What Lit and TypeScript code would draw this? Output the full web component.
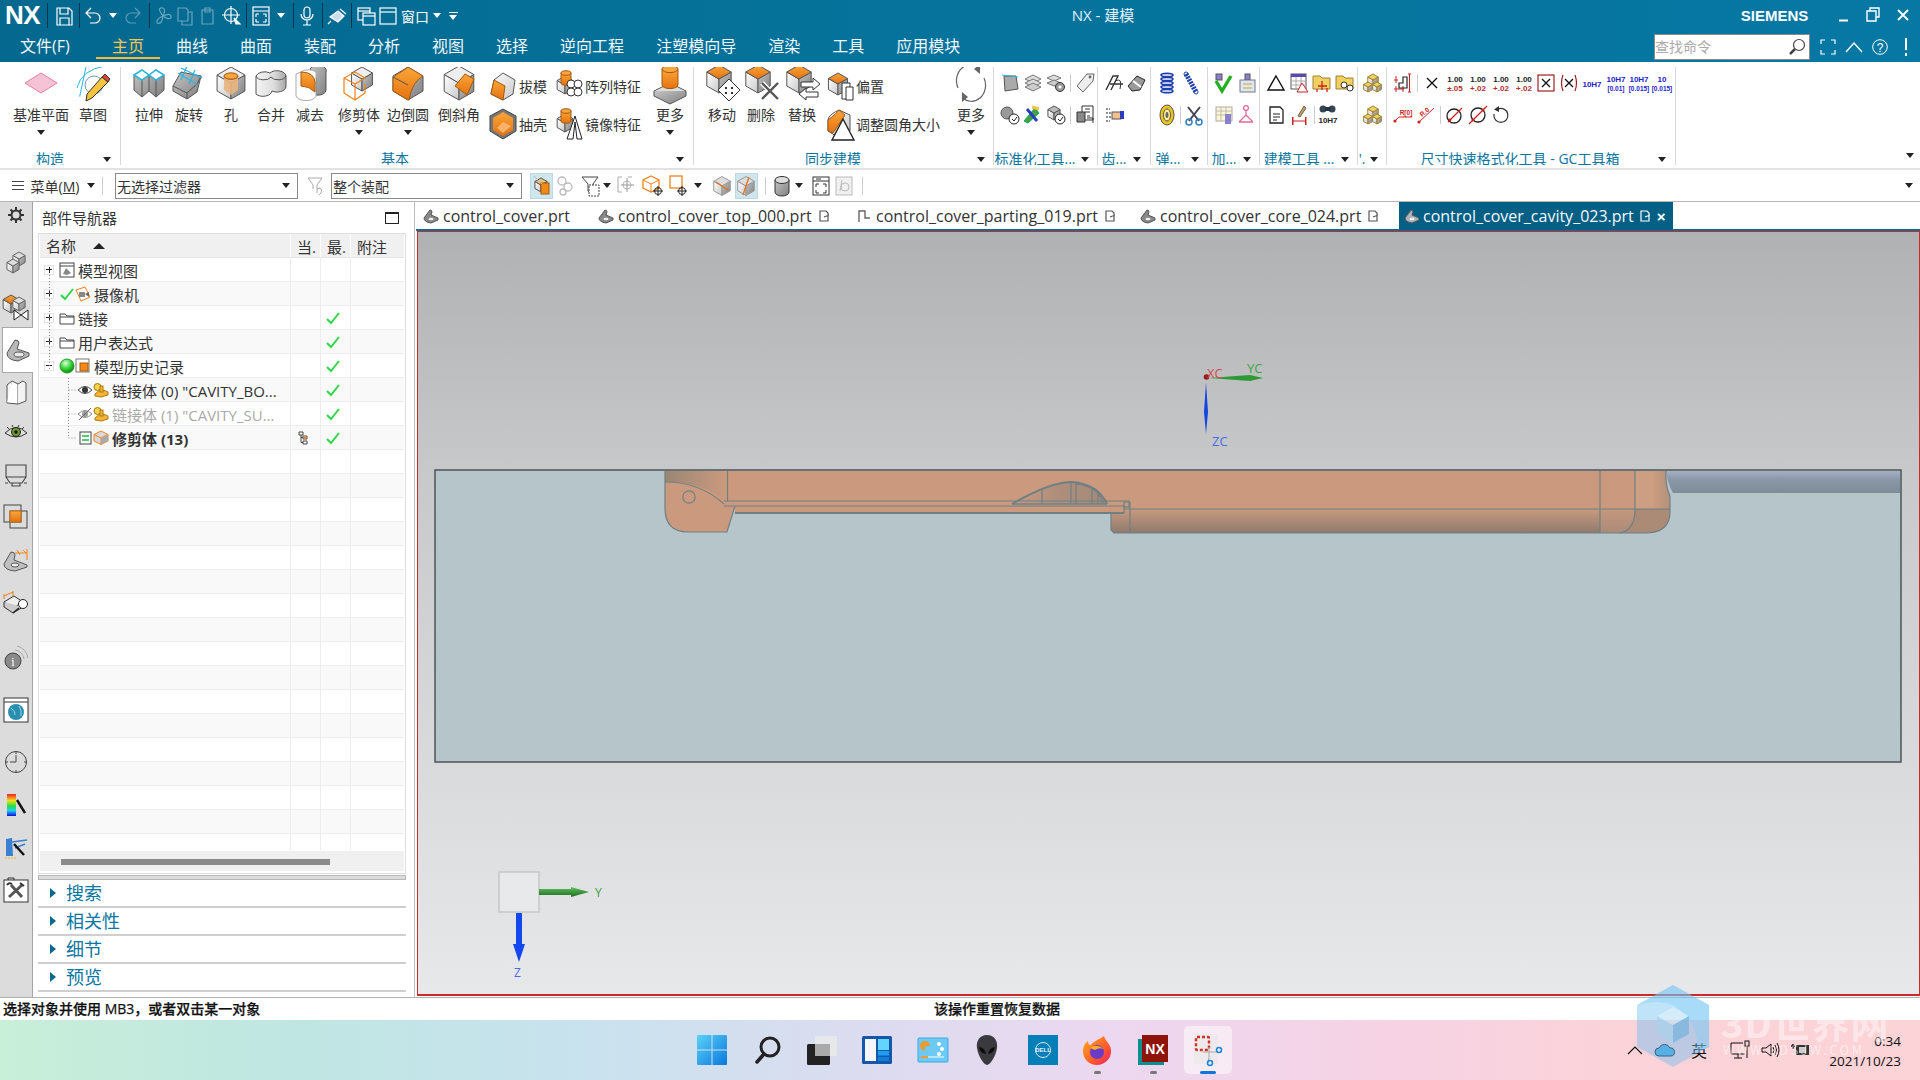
import { LitElement, html, svg, css } from "lit";
import { customElement } from "lit/decorators.js";

const I = (w: number, h: number, b: any) =>
  html`<svg class="i" width=${w} height=${h} viewBox="0 0 ${w} ${h}">${b}</svg>`;

const cube = (x: number, y: number, r: number, top = "#eee", st = "#555") => {
  const dx = r * 0.87, dy = r * 0.5;
  return svg`<polygon points="${x - dx},${y - dy} ${x},${y} ${x},${y + r} ${x - dx},${y + dy}" fill="url(#gL)" stroke=${st}/>
  <polygon points="${x},${y} ${x + dx},${y - dy} ${x + dx},${y + dy} ${x},${y + r}" fill="url(#gR)" stroke=${st}/>
  <polygon points="${x},${y - r} ${x + dx},${y - dy} ${x},${y} ${x - dx},${y - dy}" fill=${top} stroke=${st}/>`;
};
const OR = "url(#gO)";
const cyl = (x: number, y: number, rx: number, h: number, f = OR) =>
  svg`<path d="M${x - rx} ${y} V${y + h} A${rx} ${rx * 0.45} 0 0 0 ${x + rx} ${y + h} V${y}Z" fill=${f} stroke="#a35a10"/><ellipse cx=${x} cy=${y} rx=${rx} ry=${rx * 0.45} fill="#f9a53f" stroke="#a35a10"/>`;

const big: Record<string, any> = {
  datum: I(36, 26, svg`<polygon points="2,13 18,3 34,13 18,23" fill="#f6c3d6" stroke="#e57ba3"/>`),
  sketch: I(36, 40, svg`<path d="M2 25 Q6 7 30 3" fill="none" stroke="#29b6e0"/><path d="M8 2 V34" stroke="#29b6e0" fill="none" transform="rotate(12 8 18)"/><circle cx="19" cy="22" r="9" fill="none" stroke="#6a9ab0"/><polygon points="27,14 33,19 17,35 11,38 12,31" fill="#f5c33d" stroke="#333"/><polygon points="27,14 33,19 35,16 30,11" fill="#d8453a" stroke="#333"/>`),
  extrude: I(36, 38, svg`<path d="M3 11 L11 6 L18 11 L25 6 L33 11 V26 L25 33 L18 27 L11 33 L3 26Z" fill="url(#gR)" stroke="#555"/><path d="M3 11 L11 16 V33 M11 16 L18 11 V27 M18 11 L25 16 V33 M25 16 L33 11" fill="none" stroke="#555"/><path d="M3 11 L11 6 L18 11 L25 6 L33 11 L25 16 L18 11 L11 16Z" fill="#fff" stroke="#29b6e0" stroke-width="1.5"/>`),
  revolve: I(36, 38, svg`<path d="M2 22 L10 8 L30 12 L26 28 L16 35 L2 27Z" fill="url(#gR)" stroke="#555"/><path d="M2 22 L16 29 V35 M16 29 L26 20 L30 12" fill="none" stroke="#555"/><path d="M10 4 L31 14 M7 9 L27 21 M16 2 L10 16 M24 6 L18 20" stroke="#29b6e0" fill="none" stroke-width="1.3"/>`),
  hole: I(36, 38, svg`${cube(18, 19, 16)}<path d="M11 12 V26 L18 31 L25 26 V12" fill="#e9b47e" opacity=".9"/>${cyl(18, 12, 7, 0)}`),
  unite: I(36, 38, svg`<path d="M3 12 A9 6 0 0 1 17 9 A9 6 0 0 1 33 12 V23 A9 6 0 0 1 19 27 A9 6 0 0 1 3 30Z" fill="url(#gU)" stroke="#555"/><path d="M3 12 A8 5 0 0 0 18 13 A8 5 0 0 0 33 12" fill="none" stroke="#555"/>`),
  subtract: I(36, 38, svg`<path d="M18 5 A8 5 0 0 1 34 8 V26 A8 5 0 0 1 24 31 V14 Z" fill="url(#gR)" stroke="#555"/><path d="M9 8 A9 5 0 0 1 24 8 V30 A9 5 0 0 1 4 32 V10Z" fill="#fff" stroke="#aaa"/><path d="M9 8 Q22 8 23 18 L23 28 Q17 22 9 22Z" fill=${OR} stroke="#a35a10"/>`),
  trim: I(36, 38, svg`${cube(21, 15, 12)}<path d="M14 8 L3 14 V29 L14 36 L24 29 V20 M3 14 L14 20 L24 14 M14 20 V36 M14 8 L24 14" fill="none" stroke="#f0821c" stroke-width="1.2"/>`),
  blend: I(36, 38, svg`<path d="M18 3 L33 12 V27 L18 36 L3 27 V12Z" fill="url(#gR)" stroke="#555"/><path d="M3 13 Q16 5 18 3 L33 12 Q22 18 19 36 L18 36 L3 27Z" fill=${OR} stroke="#a35a10"/><path d="M3 13 L18 21" stroke="#555"/>`),
  chamfer: I(36, 38, svg`${cube(18, 19, 17)}<polygon points="24,10 33,15 26,31 14,22" fill=${OR} stroke="#a35a10"/>`),
  more: I(36, 40, svg`<polygon points="18,20 34,28 18,38 2,28" fill="#ddd" stroke="#555"/><path d="M2 28 V33 L18 41 L34 33 V28" fill="url(#gR)" stroke="#555"/>${cyl(18, 6, 8, 16)}`),
  moveB: I(36, 36, svg`${cube(15, 14, 14, OR)}<polygon points="25,14 36,25 25,36 14,25" fill="#fff" stroke="#333"/><path d="M21 22h2v2h-2zM27 22h2v2h-2zM21 27h2v2h-2zM27 27h2v2h-2z" fill="#333"/>`),
  del: I(36, 36, svg`${cube(15, 14, 14, OR)}<path d="M19 18 L35 34 M35 18 L19 34" stroke="#fff" stroke-width="5"/><path d="M19 18 L35 34 M35 18 L19 34" stroke="#555" stroke-width="2.4"/>`),
  rep: I(36, 36, svg`${cube(15, 14, 14, OR)}<path d="M18 20 H30 V16 L37 22 L30 28 V25 H18 Z" fill="#fff" stroke="#333" transform="translate(-1 -3)"/><path d="M34 27 H22 V23 L15 29 L22 35 V32 H34 Z" fill="#fff" stroke="#333"/>`),
  cycle: I(34, 42, svg`<path d="M4 26 A14 16 0 0 1 26 7 M30 16 A14 16 0 0 1 8 35" fill="none" stroke="#666" stroke-width="1.2"/><path d="M26 2 V12 L20 7Z M8 30 V40 L14 35Z" fill="#666"/>`),
  draft: I(28, 30, svg`<polygon points="14,2 26,9 24,23 14,29 2,23 5,9" fill="url(#gL)" stroke="#555"/><polygon points="5,9 16,15 14,29 2,23" fill=${OR} stroke="#a35a10"/>`),
  shell: I(28, 32, svg`<polygon points="14,1 27,8 27,23 14,31 1,23 1,8" fill="#777" stroke="#444"/><polygon points="14,4 24,10 24,22 14,28 4,22 4,10" fill=${OR}/><path d="M8 20 L14 14 L22 18 L14 25Z" fill="#f8b36a"/>`),
  pattern: I(28, 32, svg`${cube(10, 15, 9, "#ddd")}${cyl(11, 3, 5, 10)}<g fill="#fff" stroke="#333"><circle cx="16" cy="14" r="4"/><circle cx="23" cy="14" r="4"/><circle cx="16" cy="22" r="4"/><circle cx="23" cy="22" r="4"/></g>`),
  mirror: I(28, 32, svg`${cube(10, 15, 9, "#ddd")}${cyl(11, 3, 5, 10)}<path d="M20 8 L12 31 H18 L20 14 L22 31 H27Z" fill="#fff" stroke="#222"/>`),
  offset: I(28, 30, svg`${cube(12, 13, 11, OR)}<path d="M16 12 H24 V28 H16Z" fill="#fff" stroke="#333"/><path d="M20 16 H27 V29 H20Z" fill="#fff" stroke="#333"/>`),
  resize: I(30, 34, svg`<path d="M3 13 Q3 8 14 3 L25 8 V24 L14 31 L3 24Z" fill="url(#gL)" stroke="#555"/><path d="M3 13 Q12 6 14 3 L20 8 L8 26 L3 24Z" fill=${OR} stroke="#a35a10"/><polygon points="18,12 29,33 7,33" fill="#fff" stroke="#222" stroke-width="1.4"/>`),
};

const t2 = (a: string, b: string, col: string) =>
  I(22, 24, svg`<text x="11" y="11" text-anchor="middle" class="tt" fill=${col === "blue" ? "#2222cc" : "#222"}>${a}</text><text x="11" y="20" text-anchor="middle" class=${col === "blue" ? "t6" : "tt"} fill=${col === "blue" ? "#2222cc" : "#b03030"}>${b}</text>`);

const sm: Record<string, any> = {
  a1: I(20, 20, svg`<polygon points="4,3 16,3 18,16 5,18" fill="#aaa" stroke="#555"/><path d="M2 2 L18 4" stroke="#29b6e0"/>`),
  a2: I(20, 20, svg`<polygon points="10,2 18,6 10,10 2,6" fill="#ddd" stroke="#777"/><polygon points="10,6 18,10 10,14 2,10" fill="#ddd" stroke="#777"/><polygon points="10,10 18,14 10,18 2,14" fill="#ccc" stroke="#777"/>`),
  a3: I(20, 20, svg`<polygon points="8,2 15,5 8,8 1,5" fill="#ddd" stroke="#777"/><polygon points="8,7 15,10 8,13 1,10" fill="#ccc" stroke="#777"/><circle cx="14" cy="14" r="4.5" fill="#999" stroke="#333"/><circle cx="14" cy="14" r="1.6" fill="#fff"/>`),
  a4: I(20, 22, svg`<polygon points="12,2 19,2 18,9 8,20 2,14" fill="#eee" stroke="#666"/><circle cx="15" cy="5" r="1.4" fill="#666"/>`),
  a5: I(20, 20, svg`<circle cx="7" cy="8" r="6" fill="#999" stroke="#555"/><circle cx="14" cy="14" r="5" fill="#fff" stroke="#222"/><path d="M12 14 L14 16 L17 12" fill="none" stroke="#222"/>`),
  a6: I(20, 20, svg`<path d="M3 16 L14 3 L18 8 L7 18Z" fill="#43a047" stroke="#1a5"/><path d="M6 4 L16 16" stroke="#2a3cc0" stroke-width="3"/><path d="M11 2 L18 4" stroke="#f4c542" stroke-width="3"/>`),
  a7: I(20, 20, svg`${cube(8, 8, 7, "#bbb")}<circle cx="14" cy="14" r="5" fill="#fff" stroke="#222"/><path d="M12 14 L14 16 L17 12" fill="none" stroke="#222"/>`),
  a8: I(20, 22, svg`<path d="M7 2 H18 V16 H7Z" fill="#fff" stroke="#333"/><path d="M2 8 H10 V18 H2Z" fill="#888" stroke="#333"/><path d="M10 5h5M10 8h5M12 12h3" stroke="#333"/><path d="M12 14 L18 14 V19" fill="none" stroke="#333"/>`),
  b1: I(22, 20, svg`<path d="M3 17 L10 3 H15 L8 17 M7 11 H20" fill="none" stroke="#333" stroke-width="1.4"/><path d="M12 8 Q20 4 17 16" fill="none" stroke="#333"/>`),
  b2: I(22, 20, svg`<path d="M3 13 L12 3 L20 7 L15 17 L7 18Z" fill="#999" stroke="#222"/><path d="M8 8 L16 14" stroke="#fff" stroke-width="2"/>`),
  b3: I(22, 16, svg`<path d="M2 2h4M2 6h6M2 10h6M2 14h4" stroke="#222" stroke-dasharray="2 1"/><rect x="8" y="5" width="9" height="7" fill="#f0c090" stroke="#555"/><rect x="16" y="4" width="4" height="8" fill="#2a3cc0"/>`),
  c1: I(16, 22, svg`<g fill="none" stroke="#1f3fae" stroke-width="1.7"><ellipse cx="8" cy="3" rx="6" ry="1.7"/><ellipse cx="8" cy="7" rx="6" ry="1.7"/><ellipse cx="8" cy="11" rx="6" ry="1.7"/><ellipse cx="8" cy="15" rx="6" ry="1.7"/><ellipse cx="8" cy="19" rx="6" ry="1.7"/></g>`),
  c2: I(18, 24, svg`<path d="M4 3 L14 21" stroke="#1f3fae" stroke-width="5" stroke-dasharray="2 1"/><circle cx="4" cy="3" r="2" fill="none" stroke="#1f3fae"/><circle cx="14" cy="21" r="2" fill="none" stroke="#1f3fae"/>`),
  c3: I(16, 22, svg`<ellipse cx="8" cy="11" rx="7" ry="10" fill="#e8c31e" stroke="#555"/><ellipse cx="8" cy="11" rx="3.5" ry="6" fill="#fff09a" stroke="#555"/><ellipse cx="8" cy="11" rx="1.5" ry="3" fill="#666"/>`),
  c4: I(20, 22, svg`<path d="M4 3 L15 17 M16 3 L5 17" stroke="#445" stroke-width="2"/><circle cx="5" cy="18" r="3" fill="none" stroke="#3080c0" stroke-width="1.5"/><circle cx="15" cy="18" r="3" fill="none" stroke="#3080c0" stroke-width="1.5"/>`),
  d1: I(20, 22, svg`<rect x="3" y="2" width="6" height="6" fill="#8a80d0" stroke="#555"/><path d="M3 9 L9 19 L18 4" fill="none" stroke="#22b022" stroke-width="3.4"/>`),
  d2: I(20, 22, svg`<rect x="8" y="2" width="5" height="6" fill="#8a80d0" stroke="#555"/><rect x="3" y="8" width="15" height="12" fill="#dde8f5" stroke="#778"/><path d="M6 12h9M6 16h9" stroke="#d8a020"/>`),
  d3: I(20, 22, svg`<rect x="2" y="3" width="16" height="14" fill="#fff6d0" stroke="#aaa"/><path d="M2 7h16M2 11h16M7 3v14M12 3v14" stroke="#bbb"/><rect x="11" y="10" width="6" height="10" fill="#8a80d0"/>`),
  d4: I(20, 22, svg`<circle cx="10" cy="4" r="2.4" fill="none" stroke="#e06a9a" stroke-width="1.3"/><path d="M10 6 V11 L3 18 M10 11 L17 18 M3 18 H17" stroke="#e06a9a" fill="none" stroke-width="1.3"/>`),
  e1: I(20, 20, svg`<polygon points="10,3 18,17 2,17" fill="#fff" stroke="#111" stroke-width="1.4"/>`),
  e2: I(20, 22, svg`<rect x="2" y="2" width="15" height="15" fill="#fff" stroke="#555"/><rect x="2" y="2" width="15" height="3" fill="#5a4ab0"/><path d="M2 9h15M2 13h15M7 5v12M12 5v12" stroke="#aaa"/><polygon points="13,11 19,20 8,20" fill="#fff" stroke="#c22"/>`),
  e3: I(20, 22, svg`<path d="M1 4 H8 L10 6 H18 V17 H1Z" fill="#f0d060" stroke="#a08030"/><path d="M10 9 V18 M6 14 H15 M5 17 V20 M15 16 V20" stroke="#c22" stroke-width="1.3"/>`),
  e4: I(20, 22, svg`<path d="M1 4 H8 L10 6 H18 V17 H1Z" fill="#f0d060" stroke="#a08030"/><circle cx="9" cy="13" r="3" fill="#fff" stroke="#333"/><circle cx="15" cy="16" r="3" fill="#fff" stroke="#333"/>`),
  e5: I(20, 20, svg`<path d="M4 2 H14 L17 5 V18 H4Z" fill="#fff" stroke="#222" stroke-width="1.3"/><path d="M7 9h7M7 12h7M7 15h4" stroke="#222"/>`),
  e6: I(20, 22, svg`<rect x="3" y="13" width="1.5" height="8" fill="#c22"/><rect x="16" y="13" width="1.5" height="8" fill="#c22"/><path d="M4 17 H16" stroke="#c22"/><path d="M9 12 L15 2 L17 4 L11 13Z" fill="#c9a060" stroke="#665"/>`),
  e7: I(22, 24, svg`<circle cx="6" cy="6" r="3.5" fill="#345" /><circle cx="15" cy="6" r="3.5" fill="#345"/><rect x="8" y="4" width="5" height="4" fill="#234"/><text x="11" y="20" text-anchor="middle" class="tt" fill="#222">10H7</text>`),
  f1: I(20, 22, svg`${cube(10, 8, 6, "#f0d060", "#a08030")}${cube(5, 15, 5, "#f0d060", "#a08030")}${cube(14, 15, 5, "#f0d060", "#a08030")}`),
  g1: I(22, 22, svg`<path d="M2 8h4M4 4v7M16 2h3M17.500 2v18M16 20h3M2 17h10M4 14v6M11 14v6" stroke="#c22" fill="none"/><path d="M7 11 H11 V5 H15 V16 H7Z" fill="none" stroke="#222" stroke-width="1.2"/>`),
  x: I(16, 16, svg`<path d="M3 3 L13 13 M13 3 L3 13" stroke="#111" stroke-width="1.4"/>`),
  xb: I(20, 20, svg`<rect x="2" y="2" width="16" height="16" fill="#fff" stroke="#a02020" stroke-width="1.2"/><path d="M6 6 L14 14 M14 6 L6 14" stroke="#111" stroke-width="1.3"/>`),
  xp: I(20, 20, svg`<path d="M4 2 Q1 10 4 18 M16 2 Q19 10 16 18" fill="none" stroke="#a02020" stroke-width="1.2"/><path d="M6 6 L14 14 M14 6 L6 14" stroke="#111" stroke-width="1.3"/>`),
  dim1: t2("1.00", "±.05", "red"),
  dim2: t2("1.00", "+.02", "red"),
  h7: I(24, 16, svg`<text x="12" y="12" text-anchor="middle" class="tt" fill="#2222cc">10H7</text>`),
  h8: t2("10H7", "[0.01]", "blue"),
  h9: t2("10H7", "[0.015]", "blue"),
  h10: t2("10", "[0.015]", "blue"),
  r1: I(22, 18, svg`<path d="M2 16 L7 11 H20" stroke="#c22" fill="none"/><circle cx="3" cy="15" r="1.6" fill="#c22"/><text x="14" y="9" text-anchor="middle" class="t6" fill="#c22">R[0]</text>`),
  r2: I(22, 20, svg`<path d="M3 18 L19 3" stroke="#c22"/><circle cx="4" cy="17" r="1.6" fill="#c22"/><text x="7" y="12" class="t6" fill="#c22" transform="rotate(-40 7 12)">R.0</text>`),
  r3: I(20, 20, svg`<circle cx="9" cy="11" r="7" fill="none" stroke="#222" stroke-width="1.3"/><path d="M3 17 L17 3" stroke="#c22" stroke-width="1.3"/><circle cx="5" cy="15" r="1.4" fill="#c22"/>`),
  r4: I(20, 20, svg`<circle cx="10" cy="10" r="7" fill="none" stroke="#222" stroke-width="1.3"/><path d="M1 19 L19 1" stroke="#c22" stroke-width="1.3"/><circle cx="5" cy="15" r="1.4" fill="#c22"/><circle cx="15" cy="5" r="1.4" fill="#c22"/>`),
  r5: I(20, 20, svg`<path d="M8 4 A7 7 0 1 1 4 9" fill="none" stroke="#333" stroke-width="1.2"/><path d="M9 1 L4 4.500 L9 7Z" fill="#333"/>`),
};

const tb: Record<string, any> = {
  part: I(24, 24, svg`${cube(12, 11, 7, "#e8c878")}<rect x="12" y="9" width="8" height="11" fill="#f28a1a" stroke="#a35a10"/><path d="M5 2 L13 10" stroke="#bbb"/>`),
  link: I(22, 24, svg`<g fill="none" stroke="#bbb" stroke-width="1.3"><circle cx="8" cy="7" r="4"/><circle cx="14" cy="13" r="4"/><circle cx="9" cy="18" r="3"/></g>`),
  funnel: I(24, 24, svg`<path d="M3 3 H19 L14 10 V21 L9 17 V10Z" fill="none" stroke="#444"/><rect x="10" y="11" width="10" height="11" fill="#fff" stroke="#444" stroke-dasharray="2 1"/>`),
  sel1: I(22, 24, svg`<path d="M6 3 H2 V18 H6 M12 3 H16" stroke="#aaa" fill="none"/><circle cx="11" cy="11" r="4" fill="none" stroke="#bbb"/><path d="M11 4 V18 M5 11 H18" stroke="#999"/>`),
  sel2: I(24, 24, svg`<polygon points="10,2 18,6 18,14 10,18 2,14 2,6" fill="none" stroke="#f0821c" stroke-width="1.3"/><path d="M2 6 L10 10 L18 6 M10 10 V18" stroke="#f0821c" fill="none"/><circle cx="17" cy="17" r="3.500" fill="none" stroke="#222"/><path d="M17 12 V22 M12 17 H22" stroke="#222"/>`),
  sel3: I(24, 24, svg`<rect x="3" y="2" width="12" height="12" fill="none" stroke="#f0821c" stroke-width="1.3"/><circle cx="15" cy="17" r="3.500" fill="none" stroke="#222"/><path d="M15 12 V22 M10 17 H20" stroke="#222"/>`),
  c1: I(22, 24, svg`${cube(11, 12, 9.500, "#ddd", "#999")}<path d="M5 8 L17 16" stroke="#e8721c" stroke-width="1.4"/>`),
  c2: I(22, 24, svg`${cube(11, 12, 9.500, "#ddd", "#999")}<path d="M14 3 L8 21 M11 12 L14 3" stroke="#e8721c" stroke-width="1.3"/>`),
  cyl: I(22, 24, svg`<path d="M4 6 V18 A7 4 0 0 0 18 18 V6Z" fill="url(#gR)" stroke="#333"/><ellipse cx="11" cy="6" rx="7" ry="3.500" fill="#ddd" stroke="#333"/>`),
  fit: I(20, 22, svg`<rect x="2" y="2" width="16" height="18" fill="#fff" stroke="#333"/><path d="M2 6 H18 M5 4 H10" stroke="#333"/><path d="M5 9 H8 M5 9 V12 M15 9 H12 M15 9 V12 M5 18 H8 M5 18 V15 M15 18 H12 M15 18 V15" stroke="#333"/>`),
  gr: I(20, 22, svg`<rect x="2" y="2" width="16" height="18" fill="#f0f0f0" stroke="#bbb"/><circle cx="11" cy="12" r="4" fill="none" stroke="#bbb"/><path d="M6 16 L8 5" stroke="#bbb"/>`),
};

const rail = [
  [215, 0, I(20, 20, svg`<circle cx="10" cy="10" r="4.500" fill="none" stroke="#333" stroke-width="2"/><path d="M10 2 V5 M10 15 V18 M2 10 H5 M15 10 H18 M4.500 4.500 L6.500 6.500 M13.500 13.500 L15.500 15.500 M4.500 15.500 L6.500 13.500 M13.500 6.500 L15.500 4.500" stroke="#333" stroke-width="2"/>`)],
  [264, 0, I(26, 26, svg`${cube(16, 8, 7, "#ddd", "#666")}${cube(10, 15, 7, "#ddd", "#666")}`)],
  [307, 0, I(28, 28, svg`${cube(9, 11, 9, OR)}${cube(17, 11, 7, "#ddd", "#666")}<path d="M12 17 L26 27 V17 L12 27Z" fill="#fff" stroke="#222"/>`)],
  [350, 1, I(24, 24, svg`<path d="M1 15 L9 2 Q13 2 13 5 L11 11 L23 15 V18 L12 23 Q1 22 1 15Z" fill="#b8b8b8" stroke="#555"/><ellipse cx="13" cy="16.500" rx="5" ry="2.500" fill="#e8e8e8" stroke="#555"/>`)],
  [392, 0, I(22, 26, svg`<path d="M2 6 L7 2 V19 L2 24Z" fill="#f6f6f6" stroke="#555"/><path d="M7 2 L13 5 V25 L2 24" fill="#fff" stroke="#555"/><path d="M13 5 L18 2 L21 4 V22 L13 25" fill="#f3f3f3" stroke="#555"/>`)],
  [432, 0, I(24, 16, svg`<path d="M1 9 Q12 -2 23 9 Q12 17 1 9Z" fill="#ddd" stroke="#333"/><circle cx="12" cy="8" r="4.500" fill="#6a9a2a" stroke="#222"/><circle cx="12" cy="8" r="1.700" fill="#111"/><path d="M3 3 L5 5 M8 1 L9 3 M15 1 L14 3 M20 3 L18 5" stroke="#333"/>`)],
  [475, 0, I(24, 24, svg`<path d="M2 2 H22 V14 H2Z M2 14 L6 20 H18 L22 14 M4 20 H1 M20 20 H23 M8 20 V23 H16 V20" fill="none" stroke="#444" stroke-width="1.100"/>`)],
  [517, 0, I(26, 26, svg`<rect x="1" y="1" width="17" height="17" fill="none" stroke="#444"/><rect x="7" y="7" width="17" height="17" fill="none" stroke="#444"/><rect x="7" y="7" width="11" height="11" fill=${OR} stroke="#c26a10"/>`)],
  [560, 0, I(26, 24, svg`<path d="M1 16 L8 4 Q12 4 12 7 L11 12 L24 17 V19 L12 23 Q1 22 1 16Z" fill="#c0c0c0" stroke="#555"/><ellipse cx="12" cy="17" rx="4" ry="2" fill="#eee" stroke="#555"/><path d="M12 5 H24 M24 1 V12 M14 2 L17 7 M20 2 L23 5" stroke="#f0821c"/>`)],
  [603, 0, I(26, 26, svg`<polygon points="1,12 11,6 20,12 10,18" fill="#eee" stroke="#333"/><path d="M1 12 V17 L10 23 L20 17" fill="#ccc" stroke="#333"/><path d="M1 6 L10 2 M1 4 V9 M10 1 V6" stroke="#f0821c"/><circle cx="20" cy="14" r="4.500" fill="#fff" stroke="#222"/><path d="M16 18 L10 23" stroke="#222" stroke-width="1.6"/>`)],
  [658, 0, I(26, 26, svg`<circle cx="10" cy="16" r="8" fill="#8a8a8a" stroke="#444"/><text x="10" y="21" text-anchor="middle" font-size="12" fill="#fff" font-family="Liberation Serif">i</text><path d="M12 5 A10 10 0 0 1 21 14 M14 1 A14 14 0 0 1 25 13" fill="none" stroke="#aaa"/>`)],
  [710, 0, I(26, 26, svg`<rect x="1" y="1" width="24" height="24" fill="#fff" stroke="#333"/><path d="M1 5 H25" stroke="#333"/><circle cx="13" cy="15" r="8" fill="#2a8fb0"/><path d="M8 11 Q13 15 12 18 M16 9 Q19 13 18 19" stroke="#9fd4e6" fill="none"/>`)],
  [762, 0, I(24, 24, svg`<circle cx="12" cy="12" r="10.500" fill="none" stroke="#444"/><path d="M12 1 V4 M12 20 V23 M1 12 H4 M20 12 H23 M12 5 V12 H6" stroke="#444" fill="none"/>`)],
  [805, 0, I(24, 26, svg`<defs><linearGradient id="rb" x2="0" y2="1"><stop offset="0" stop-color="#f02020"/><stop offset=".3" stop-color="#f0e020"/><stop offset=".55" stop-color="#20e040"/><stop offset=".75" stop-color="#20d0f0"/><stop offset="1" stop-color="#1010e0"/></linearGradient></defs><rect x="3" y="2" width="9" height="22" fill="url(#rb)"/><path d="M13 8 L21 21" stroke="#111" stroke-width="2.400"/>`)],
  [848, 0, I(26, 24, svg`<polygon points="3,3 9,2 10,20 3,20" fill="#3a7fd0"/><path d="M9 6 L24 4 M12 12 L22 8" stroke="#3a7fd0" stroke-width="1.500"/><path d="M11 8 L21 19" stroke="#111" stroke-width="2.400"/><path d="M2 22 H14" stroke="#e0c020" stroke-dasharray="2 1"/>`)],
  [890, 0, I(26, 26, svg`<rect x="1" y="3" width="24" height="22" fill="#fff" stroke="#333"/><path d="M5 3 V1 H11 V3" fill="none" stroke="#333"/><path d="M6 20 L19 8 M8 8 L19 20" stroke="#555" stroke-width="3"/><path d="M4 8 Q6 5 9 7 M17 6 L21 9" stroke="#333" stroke-width="2" fill="none"/>`)],
];

function place(origin: number, items: [number, number, any][]) {
  let x = origin;
  return items.map(([c, w, t]) => {
    const m = c - w / 2 - x;
    x = c + w / 2;
    return html`<span class="p" style="margin-left:${m}px;width:${w}px">${t}</span>`;
  });
}
const dd = html`<i class="dd"></i>`;
const ddw = html`<i class="dd w"></i>`;
const vsep = html`<i class="vs"></i>`;
const tsep = html`<i class="ts"></i>`;
const bigT = (label: string, icon: any, drop = false) =>
  html`<span class="bt"><span class="bi">${icon}</span><span class="bl">${label}</span>${drop ? html`<i class="dd bd"></i>` : ""}</span>`;
const smT = (a: [any, string], b: [any, string]) =>
  html`<span class="st"><span class="sr"><span class="si">${a[0]}</span>${a[1]}</span><span class="sr"><span class="si">${b[0]}</span>${b[1]}</span></span>`;

const W = (b: any, w = 22, h = 22) => I(w, h, svg`<g fill="none" stroke="#fff" stroke-width="1.200">${b}</g>`);
const qat: [number, number, any][] = [
  [47, 1, tsep],
  [64, 22, W(svg`<path d="M4 3 H16 L19 6 V20 H4Z M7 3 V9 H15 V3 M7 20 V13 H16 V20"/>`)],
  [79, 1, tsep],
  [92, 22, W(svg`<path d="M6 8 H14 A5 5 0 0 1 14 18 H9 M10 3 L5 8 L10 13"/>`)],
  [113, 10, ddw],
  [134, 22, W(svg`<g opacity=".35"><path d="M16 8 H8 A5 5 0 0 0 8 18 H13 M12 3 L17 8 L12 13"/></g>`)],
  [149, 1, tsep],
  [163, 22, W(svg`<g opacity=".4"><path d="M11 11 Q4 2 11 3 Q14 5 11 11 Q20 7 19 13 Q16 15 11 11 Q10 20 5 18 Q4 14 11 11"/></g>`)],
  [185, 22, W(svg`<g opacity=".4"><path d="M4 3 H12 L14 5 V16 H4Z M14 7 H18 V20 H8 V16"/></g>`)],
  [208, 22, W(svg`<g opacity=".4"><path d="M5 5 H16 V19 H5Z M8 3 H13 V7 H8Z"/></g>`)],
  [232, 22, W(svg`<circle cx="10" cy="10" r="6.500"/><path d="M10 1 V19 M1 10 H19"/><path d="M13 13 L19 19 L15 19 Z" fill="#fff"/>`)],
  [246, 1, tsep],
  [261, 22, W(svg`<rect x="3" y="2" width="16" height="18"/><path d="M3 6 H19 M6 9 H9 M6 9 V12 M16 9 H13 M16 9 V12 M6 17 H9 M6 17 V14 M16 17 H13 M16 17 V14"/>`)],
  [281, 10, ddw],
  [293, 1, tsep],
  [307, 20, W(svg`<rect x="7" y="2" width="6" height="11" rx="3"/><path d="M4 9 A6 6 0 0 0 16 9 M10 15 V20 M6 20 H14"/>`, 20)],
  [322, 1, tsep],
  [337, 22, W(svg`<path d="M4 12 L12 6 L18 11 L12 17 Z M14 4 L20 9 M5 16 L2 19" fill="#cde"/>`)],
  [351, 1, tsep],
  [366, 22, W(svg`<rect x="3" y="3" width="12" height="12"/><path d="M3 6 H15"/><rect x="8" y="8" width="12" height="12" fill="#04719b"/><path d="M8 11 H20"/>`)],
  [388, 20, W(svg`<rect x="2" y="3" width="16" height="16"/><path d="M2 7 H18"/>`, 20)],
  [415, 28, html`<span class="wn">窗口</span>`],
  [437, 10, ddw],
  [453, 12, html`<i class="ddl"></i>`],
  [1103, 72, html`<span class="ttl">NX - 建模</span>`],
  [1774.5, 70, html`<span class="siem">SIEMENS</span>`],
  [1844, 12, I(12, 22, svg`<path d="M1 15.500 H10" stroke="#fff" stroke-width="2"/>`)],
  [1873, 14, I(14, 22, svg`<path d="M1 6 H10 V16 H1Z M4 6 V3 H13 V12 H10" fill="none" stroke="#fff" stroke-width="1.400"/>`)],
  [1903, 14, I(14, 22, svg`<path d="M2 5 L12 15 M12 5 L2 15" fill="none" stroke="#fff" stroke-width="1.800"/>`)],
];

const menus = ["主页", "曲线", "曲面", "装配", "分析", "视图", "选择", "逆向工程", "注塑模向导", "渲染", "工具", "应用模块"];

const tabIcon = (col = "#888") => I(16, 16, svg`<path d="M1 10 L7 2 Q9 2 9 4 L8 7 L15 10 V12 L8 15 Q1 14 1 10Z" fill=${col} stroke="#555"/><ellipse cx="8" cy="11" rx="2.500" ry="1.200" fill="#eee"/>`);
const doc = (c = "#555") => I(12, 14, svg`<path d="M2 2 H8 L10 4 V12 H2Z M6 8 L11 6" fill="none" stroke=${c} stroke-width="1.200"/>`);
const tabs = [
  { t: "control_cover.prt", w: 175, m: false, ic: tabIcon() },
  { t: "control_cover_top_000.prt", w: 258, m: true, ic: tabIcon() },
  { t: "control_cover_parting_019.prt", w: 284, m: true, ic: I(16, 16, svg`<path d="M3 14 V3 H9 V10 H14" fill="none" stroke="#666" stroke-width="1.400"/>`) },
  { t: "control_cover_core_024.prt", w: 265, m: true, ic: tabIcon() },
];

const check = I(16, 16, svg`<path d="M2 9 L6 13 L14 3" fill="none" stroke="#2dd84a" stroke-width="2"/>`);
const expB = (minus = false) => html`<i class="exp">${minus ? "" : html`<b></b>`}</i>`;
const winI = I(16, 16, svg`<rect x="1" y="1" width="14" height="14" fill="#fff" stroke="#444"/><path d="M1 4 H15" stroke="#444"/><path d="M4 12 L7 6 L12 11 L8 13Z" fill="#888"/>`);
const folder = I(16, 14, svg`<path d="M1 3 H6 L8 5 H15 V13 H1Z M1 6 H15" fill="#fff" stroke="#444"/>`);
const ball = I(16, 16, svg`<defs><radialGradient id="bg" cx=".4" cy=".3" r=".7"><stop offset="0" stop-color="#d8ffd8"/><stop offset=".6" stop-color="#30d030"/><stop offset="1" stop-color="#0a8a0a"/></radialGradient></defs><circle cx="8" cy="8" r="7" fill="url(#bg)" stroke="#289a28"/>`);
const cam = I(16, 16, svg`<polygon points="1,4 10,1 15,11 6,15" fill="#fff" stroke="#f0821c"/><rect x="4" y="6" width="6" height="5" fill="#888"/><path d="M10 8 L14 6 V11Z" fill="#666"/>`);
const hist = I(16, 16, svg`<rect x="1" y="1" width="13" height="13" fill="#fff" stroke="#777"/><rect x="5" y="5" width="8" height="8" fill="#f28a1a" stroke="#a35a10"/>`);
const eye = (off = false) => I(16, 14, svg`<path d="M1 7 Q8 0 15 7 Q8 14 1 7Z" fill="#fff" stroke=${off ? "#888" : "#444"}/><circle cx="8" cy="7" r="3" fill=${off ? "#999" : "#333"}/>${off ? svg`<path d="M2 13 L14 1" stroke="#666"/>` : ""}`);
const lnk = I(16, 16, svg`<circle cx="4.500" cy="5" r="3.500" fill="#f7d24a" stroke="#a07810"/><polygon points="2,12 8,7 15,10 15,13 8,15 2,14" fill="#f4b534" stroke="#b07a10"/><rect x="7" y="4" width="3" height="6" fill="#f4b534" stroke="#b07a10"/>`);
const eqI = I(13, 14, svg`<rect x="1" y="1" width="11" height="12" fill="#fff" stroke="#444"/><path d="M3 5 H10 M3 9 H10" stroke="#22bb44" stroke-width="1.600"/>`);
const trimI = I(16, 15, svg`<polygon points="8,1 15,4.500 15,11 8,14.500 1,11 1,4.500" fill="#d9d9d9" stroke="#f0821c"/><path d="M1 4.500 L8 8 L15 4.500 M8 8 V14.500" stroke="#f0821c" fill="none"/><polygon points="8,8 15,4.500 15,11 8,14.500" fill="#aaa"/>`);
const treeI = I(10, 14, svg`<path d="M1 1h4v3h-4zM5 5h4v3h-4zM5 10h4v3h-4zM3 4 V11.500 H5 M3 6.500 H5" fill="#fff" stroke="#444"/><rect x="5.500" y="5.500" width="3" height="2" fill="#f0821c"/>`);

const rows: any[] = [
  { l: 0, e: expB(), ic: [winI], t: "模型视图" },
  { l: 0, e: expB(), ic: [check, cam], t: "摄像机" },
  { l: 0, e: expB(), ic: [folder], t: "链接", k: 1 },
  { l: 0, e: expB(), ic: [folder], t: "用户表达式", k: 1 },
  { l: 0, e: expB(true), ic: [ball, hist], t: "模型历史记录", k: 1 },
  { l: 1, ic: [eye(), lnk], t: '链接体 (0) "CAVITY_BO...', k: 1 },
  { l: 1, ic: [eye(true), lnk], t: '链接体 (1) "CAVITY_SU...', k: 1, dim: 1 },
  { l: 1, ic: [eqI, trimI], t: "修剪体 (13)", k: 1, bold: 1, c: treeI },
];
const emptyRows = Array.from({ length: 17 });

const snip = I(30, 34, svg`<rect x="1" y="1" width="24" height="30" fill="#e8e8e8" opacity=".7"/><rect x="3" y="4" width="13" height="13" rx="1" fill="none" stroke="#d0321e" stroke-width="2.400" stroke-dasharray="3 2"/><path d="M16 14 V24 M16 19 L24 19 M16 19 L10 19 M16 24 L15 30" stroke="#aaa"/><circle cx="26" cy="17" r="2.500" fill="none" stroke="#1a86d8" stroke-width="1.500"/><circle cx="17" cy="30" r="2.500" fill="none" stroke="#1a86d8" stroke-width="1.500"/>`);
const taskIcons: [number, number, any][] = [
  [712, 0, I(30, 30, svg`<defs><linearGradient id="w" x2="1" y2="1"><stop offset="0" stop-color="#5ad2fa"/><stop offset="1" stop-color="#0a78dc"/></linearGradient></defs><path d="M0 1 Q0 0 1 0 H14.500 V14.500 H0Z M15.500 0 H29 Q30 0 30 1 V14.500 H15.500Z M0 15.500 H14.500 V30 H1 Q0 30 0 29Z M15.500 15.500 H30 V29 Q30 30 29 30 H15.500Z" fill="url(#w)"/>`)],
  [768, 0, I(28, 30, svg`<circle cx="16" cy="12" r="9" fill="none" stroke="#222" stroke-width="3"/><path d="M10 19 L3 27" stroke="#222" stroke-width="3.500" stroke-linecap="round"/>`)],
  [822, 0, I(30, 30, svg`<rect x="0" y="9" width="23" height="21" rx="1.500" fill="#222"/><rect x="8" y="1" width="22" height="20" rx="1.500" fill="#e8e8e8" opacity=".95"/><rect x="8" y="9" width="15" height="12" fill="#aaa"/>`)],
  [877, 0, I(30, 28, svg`<rect x="0" y="0" width="30" height="28" rx="1.500" fill="#1557a8"/><rect x="3" y="3" width="11" height="22" fill="#f4f6f8"/><rect x="16" y="3" width="11" height="11" fill="#62d4ff"/><rect x="16" y="15" width="11" height="4.500" fill="#1e9cf0"/><rect x="16" y="21" width="11" height="4" fill="#0f7fdc"/>`)],
  [933, 0, I(30, 24, svg`<rect x="0" y="0" width="30" height="24" rx="1" fill="#6ccaf5" stroke="#3fa8e0"/><path d="M7 13 A5 5 0 1 1 12 8 H7Z" fill="#f09a30"/><circle cx="21" cy="6" r="2" fill="#fff"/><circle cx="24" cy="11" r="2" fill="#fff"/><circle cx="21" cy="16" r="2" fill="#fff"/><path d="M3 19 H26" stroke="#fff"/><path d="M3 19 H10" stroke="#f09a30" stroke-width="2"/>`)],
  [987, 0, I(24, 32, svg`<path d="M12 1 C20 1 23 8 22 14 C21 22 15 31 12 31 C9 31 3 22 2 14 C1 8 4 1 12 1Z" fill="#3a3a3e"/><path d="M4 13 Q10 14 11 20 Q5 19 4 13Z M20 13 Q14 14 13 20 Q19 19 20 13Z" fill="#0c0c0c"/>`)],
  [1043, 0, I(30, 30, svg`<rect x="0" y="0" width="30" height="30" fill="#067fb8"/><circle cx="15" cy="15" r="7.500" fill="none" stroke="#cfe8f4"/><text x="15" y="17" text-anchor="middle" font-size="6" font-family="Liberation Sans" font-weight="700" fill="#e8f4fa">DELL</text>`)],
  [1097, 1, I(30, 30, svg`<defs><linearGradient id="ff" x1="0" y1="0" x2="1" y2="1"><stop offset="0" stop-color="#ffb020"/><stop offset=".6" stop-color="#ff5a2a"/><stop offset="1" stop-color="#e8206a"/></linearGradient></defs><path d="M22 1 C23 6 28 8 29 15 C30 23 23 30 15 30 C7 30 1 24 1 16 C1 11 3 8 6 6 C6 9 7 10 9 10 C10 7 16 5 22 1Z" fill="url(#ff)"/><circle cx="15" cy="17" r="7" fill="#6a3ac8"/><path d="M8 13 Q14 8 22 14 Q17 12 13 15Z" fill="#ffb020"/>`)],
  [1153, 1, I(30, 30, svg`<rect x="0" y="4" width="26" height="26" fill="#0d8f8f"/><rect x="4" y="0" width="26" height="27" fill="#8e1409"/><text x="17" y="19" text-anchor="middle" font-size="14" font-weight="700" font-family="Liberation Sans" fill="#fff">NX</text>`)],
];

@customElement("app-root")
export class AppRoot extends LitElement {
  static styles = css`
    :host{display:block;width:1920px;height:1080px;overflow:hidden;position:relative;background:#fff;font-family:"Open Sans","Noto Sans CJK SC",sans-serif;color:#333;font-size:14px}
    *{box-sizing:border-box}
    svg.i{display:block;flex:none;overflow:visible}
    .defs{position:absolute;width:0;height:0}
    .tt{font:700 8px "Liberation Sans",sans-serif}
    .t6{font:700 6.500px "Liberation Sans",sans-serif}
    .p{display:inline-flex;flex:none;align-items:center;justify-content:center;white-space:nowrap}
    .dd{display:block;width:0;height:0;border-left:4px solid transparent;border-right:4px solid transparent;border-top:5px solid #222;flex:none}
    .dd.w{border-top-color:#fff}
    .ddl{display:block;width:9px;height:8px;border-top:1px solid #fff;position:relative}
    .ddl::after{content:"";display:block;margin:2px 0 0 0;width:0;height:0;border-left:4.500px solid transparent;border-right:4.500px solid transparent;border-top:5px solid #fff}
    .vs{display:block;width:1px;height:18px;background:#ccc}
    .ts{display:block;width:1px;height:25px;background:#02344d}
    .top{height:62px;background:linear-gradient(90deg,#04688f 0,#05729a 40%,#0678a3 100%);color:#fff}
    .r1{height:31px;display:flex;align-items:center;position:relative}
    .nx{width:36px;margin-left:5px;font:700 26px/31px "Liberation Sans",sans-serif;letter-spacing:-.5px;flex:none}
    .wn{font-size:14px;color:#fff}
    .ttl{color:#e2f0f6;font-size:15px;margin-top:-2px}
    .siem{font:700 15px/31px "Liberation Sans",sans-serif}
    .r2{height:31px;display:flex;align-items:center;padding-left:20px;font-size:16px}
    .m{flex:none;padding:0 16px;height:31px;line-height:30px;color:#eef6fa;position:relative}
    .m.f{padding:0;width:76px}
    .m.on{color:#f8c64e}
    .m.on::after{content:"";position:absolute;left:0;right:0;bottom:3px;height:2px;background:#f5b83d}
    .srch{margin-left:auto;width:156px;height:26px;background:#fff;border:1px solid #8a8a8a;display:flex;align-items:center;justify-content:space-between;color:#aaa;font-size:14px;padding-right:3px;flex:none;line-height:24px}
    .rc{display:flex;align-items:center;flex:none;width:110px}
    .ribbon{height:108px;display:flex;padding-top:5px;border-bottom:2px solid #e2e2e2;background:#fff}
    .g{flex:none;height:98px;border-right:1px solid #d8d8d8;display:flex;flex-direction:column;overflow:hidden}
    .gb{height:83px;display:flex;flex:none}
    .gb>.p{align-items:flex-start}
    .gs{height:83px;flex:none}
    .gr{height:32px;display:flex;align-items:center}
    .gl{height:18px;display:flex;align-items:center;color:#0b76a0;font-size:14px;line-height:18px;flex:none}
    .bt{display:flex;flex-direction:column;align-items:center;width:100%}
    .bi{height:32px;display:flex;align-items:center;justify-content:center}
    .bl{height:24px;line-height:24px;white-space:nowrap;color:#333;display:block;margin-top:4px}
    .bd{margin-top:3px}
    .st{display:flex;flex-direction:column;width:100%}
    .sr{height:38px;display:flex;align-items:center;gap:2px;white-space:nowrap;color:#333}
    .si{width:28px;display:flex;justify-content:center;flex:none}
    .tool2{height:32px;display:flex;align-items:center;border-bottom:1px solid #b5b5b5;flex:none}
    .sel{height:26px;border:1px solid #8a8a8a;display:flex;align-items:center;justify-content:space-between;padding:0 7px 0 1px;font-size:14px;background:#fff;width:100%;color:#333}
    .hb{width:12px;height:9px;border-top:1px solid #444;border-bottom:1px solid #444;position:relative}
    .hb::after{content:"";position:absolute;left:0;right:0;top:3px;height:1px;background:#444}
    .act{background:#cfe6ec;border:1px solid #b9d9e3;width:100%;height:26px;display:flex;align-items:center;justify-content:center}
    .u{text-decoration:underline}
    .main{display:flex;height:795px;align-items:stretch}
    .rail{width:33px;flex:none;background:#dcdcdc;border-right:1px solid #a4a4a4;display:flex;flex-direction:column;position:relative}
    .ri{display:flex;justify-content:center;align-items:center;height:42px;flex:none;width:32px}
    .ri.on{background:#fff;border:1px solid #a8a8a8;border-right:0;width:31px;height:46px;margin-left:2px;position:relative;z-index:1;justify-content:flex-start;padding-left:3px}
    .nav{width:382px;flex:none;display:flex;flex-direction:column;background:#fff;border-right:1px solid #bdbdbd;padding-left:5px}
    .nh{height:31px;display:flex;align-items:center;padding-left:4px;padding-right:15px;justify-content:space-between;flex:none;color:#333;font-size:15px}
    .mx{width:14px;height:12px;border:1.500px solid #222;border-top-width:2px;display:block}
    .tbl{width:368px;height:641px;border:1px solid #dedede;flex:none;padding:0 1px;display:flex;flex-direction:column}
    .hd{display:grid;grid-template-columns:250px 30px 30px 54px;height:24px;background:#f0f0f0;flex:none;line-height:26px;border-bottom:1px solid #e5e5e5;color:#333}
    .hd>span{border-left:1px solid #fff;padding-left:6px;white-space:nowrap;overflow:hidden;font-size:15px}
    .hd>span:first-child{border:0;padding-left:6px;display:flex;align-items:center;gap:17px}
    .sort{display:block;width:0;height:0;border-left:6px solid transparent;border-right:6px solid transparent;border-bottom:6px solid #222}
    .body{height:592px;overflow:hidden;position:relative;flex:none}
    .row{display:grid;grid-template-columns:250px 30px 30px 54px;height:24px;border-bottom:1px solid #ededed;font-size:15px}
    .row.alt{background:#f9f9f9}
    .row>span{border-left:1px solid #ededed;display:flex;align-items:center;justify-content:center}
    .row>span:first-child{border:0;justify-content:flex-start;padding-left:4px;white-space:nowrap;overflow:hidden}
    .row>span:nth-child(3){padding-right:5px}
    .row>span:nth-child(2){padding-right:6px}
    .row.l1>span:first-child{padding-left:37px}
    .row .icn{display:flex;align-items:center;width:16px;justify-content:center;flex:none}
    .row .tx{margin-left:3px;padding-top:1px}
    .row.dim .tx{color:#aaa}
    .row.bold .tx{font-weight:700}
    .exp{display:block;width:10px;height:10px;border:1px solid #e2e2e2;background:#fff;position:relative;margin-right:5px;flex:none}
    .exp::before{content:"";position:absolute;left:1px;top:3.500px;width:6px;height:1px;background:#222}
    .exp b{position:absolute;left:3.500px;top:1px;width:1px;height:6px;background:#222}
    .dots{position:absolute;left:0;top:0;pointer-events:none}
    .sb{height:20px;background:#f0f0f0;flex:none;margin-top:1px;padding:8px 0 0 21px}
    .sb i{display:block;width:269px;height:6px;background:#8a8a8a}
    .sash{height:5px;width:368px;border:1px solid #b8b8b8;background:#dcdcdc;margin-top:1px;flex:none}
    .sec{height:28px;border-bottom:2px solid #cfcfcf;width:368px;display:flex;align-items:center;padding-left:12px;gap:10px;color:#0b76a0;font-size:18px;flex:none}
    .sec i{display:block;width:0;height:0;border-top:5.500px solid transparent;border-bottom:5.500px solid transparent;border-left:6px solid #0a6a8e}
    .sec span{line-height:28px}
    .right{flex:1;display:flex;flex-direction:column;min-width:0;padding-left:2px}
    .tabs{height:29px;display:flex;background:#fff;flex:none;border-bottom:2px solid #0a6f94;margin-left:-1px;padding-left:1px}
    .tab{display:flex;align-items:center;gap:4px;padding-left:6px;flex:none;font-size:16px;white-space:nowrap;color:#333;height:27px}
    .tab .mk{margin-left:2px;display:block}
    .tab.on{background:#045f85;color:#f3f8fa;width:274px;padding-left:5px;height:28px;gap:3px}
    .xx{font:700 15px "Liberation Sans",sans-serif;margin-left:3px;color:#fff}
    .vp{flex:1;border:1px solid #cc2a2a;background:linear-gradient(180deg,#b0b1b3 0,#c7c8ca 31%,#e7e8ea 100%);overflow:hidden;border-bottom-width:2px;margin-bottom:1px}
    .vp svg{display:block;width:1500px;height:762px}
    .vp text{font-family:"Open Sans",sans-serif}
    .status{height:23px;border-top:1px solid #b0b0b0;display:flex;align-items:center;background:#fff;color:#111;font-size:14px;padding-left:3px;line-height:22px;font-weight:500;-webkit-text-stroke:.25px #111}
    .sm{position:absolute;left:934px}
    .task{height:60px;display:flex;align-items:center;background:linear-gradient(90deg,#c8efd8 0,#bfe6e2 15%,#c8e2ee 30%,#dcdcf0 45%,#ecd8f0 58%,#f6d2e4 72%,#fbd3d8 85%,#fcd3d6 100%)}
    .ti{width:48px;height:48px;display:flex;align-items:center;justify-content:center;position:relative;flex:none}
    .ti.on{background:rgba(255,255,255,.5);border-radius:5px}
    .ti .d{position:absolute;bottom:0;left:50%;width:7px;height:3px;margin-left:-3.500px;border-radius:2px;background:#777}
    .ti.on .d{width:16px;margin-left:-8px;background:#0a78d8;bottom:0}
    .yy{font-size:16px;color:#111}
    .clock{text-align:right;font-size:13.500px;line-height:20px;color:#111;width:100%;margin-top:1px}
    .wm{position:absolute;left:1637px;top:985px;width:270px;height:84px;pointer-events:none}
    .wm text{font-family:"Noto Sans CJK SC","Open Sans",sans-serif}
  `;

  render() {
    return html`
    <svg class="defs"><defs>
      <linearGradient id="gL" x2="1" y2="1"><stop offset="0" stop-color="#fff"/><stop offset="1" stop-color="#c8c8c8"/></linearGradient>
      <linearGradient id="gR" x2="1" y2="1"><stop offset="0" stop-color="#c4c4c4"/><stop offset="1" stop-color="#808080"/></linearGradient>
      <linearGradient id="gU" x2="1" y2="0"><stop offset="0" stop-color="#f4f4f4"/><stop offset=".6" stop-color="#dcdcdc"/><stop offset="1" stop-color="#a8a8a8"/></linearGradient>
      <linearGradient id="gO" x2="0" y2="1"><stop offset="0" stop-color="#fba63a"/><stop offset="1" stop-color="#e4720f"/></linearGradient>
    </defs></svg>
    <div class="top">
      <div class="r1">
        <span class="nx">NX</span>
        ${place(41, qat)}
      </div>
      <div class="r2">
        <span class="m f">文件(F)</span>
        ${menus.map((m, i) => html`<span class="m ${i === 0 ? "on" : ""}">${m}</span>`)}
        <span class="srch">查找命令${I(18, 18, svg`<circle cx="11" cy="7" r="5.500" fill="none" stroke="#444" stroke-width="1.200"/><path d="M7 11 L2 16" stroke="#444" stroke-width="2.500"/>`)}</span>
        <span class="rc">${place(1810, [
          [1828, 16, I(16, 16, svg`<path d="M1 5 V1 H5 M11 1 H15 V5 M15 11 V15 H11 M5 15 H1 V11" fill="none" stroke="#fff" stroke-width="1.200"/>`)],
          [1854, 18, I(18, 12, svg`<path d="M1 11 L9 2 L17 11" fill="none" stroke="#fff" stroke-width="1.300"/>`)],
          [1880, 16, I(16, 16, svg`<circle cx="8" cy="8" r="7.300" fill="none" stroke="#fff"/><text x="8" y="12.500" text-anchor="middle" font-size="12" fill="#fff" font-family="Liberation Sans">?</text>`)],
          [1906, 4, I(4, 18, svg`<path d="M2 0 V12 M2 15 V18" stroke="#fff" stroke-width="2"/>`)],
        ])}</span>
      </div>
    </div>

    <div class="ribbon">
      ${this.grp(121, 0, place(0, [[41, 70, bigT("基准平面", big.datum, true)], [93, 34, bigT("草图", big.sketch)]]), "构造", 50, 107)}
      ${this.grp(573, 121, place(121, [
        [149, 40, bigT("拉伸", big.extrude)], [189, 40, bigT("旋转", big.revolve)], [231, 40, bigT("孔", big.hole)], [271, 38, bigT("合并", big.unite)], [310, 40, bigT("减去", big.subtract)],
        [359, 50, bigT("修剪体", big.trim, true)], [408, 48, bigT("边倒圆", big.blend, true)], [459, 50, bigT("倒斜角", big.chamfer)],
        [520, 62, smT([big.draft, "拔模"], [big.shell, "抽壳"])], [598, 86, smT([big.pattern, "阵列特征"], [big.mirror, "镜像特征"])],
        [670, 40, bigT("更多", big.more, true)],
      ]), "基本", 395, 680)}
      ${this.grp(300, 694, place(694, [
        [722, 38, bigT("移动", big.moveB)], [761, 38, bigT("删除", big.del)], [802, 38, bigT("替换", big.rep)],
        [884, 116, smT([big.offset, "偏置"], [big.resize, "调整圆角大小"])], [971, 40, bigT("更多", big.cycle, true)],
      ]), "同步建模", 833, 981)}
      ${this.grpS(104, 994, [[1010, 22, sm.a1], [1033, 22, sm.a2], [1056, 22, sm.a3], [1070, 1, vsep], [1085, 22, sm.a4]], [[1010, 22, sm.a5], [1031, 22, sm.a6], [1056, 22, sm.a7], [1070, 1, vsep], [1085, 22, sm.a8]], "标准化工具...", 1035, 80, 1085)}
      ${this.grpS(53, 1098, [[1114, 22, sm.b1], [1136, 22, sm.b2]], [[1115, 22, sm.b3]], "齿...", 1114, 24, 1137)}
      ${this.grpS(57, 1151, [[1167, 18, sm.c1], [1191, 20, sm.c2]], [[1167, 18, sm.c3], [1180, 1, vsep], [1194, 20, sm.c4]], "弹...", 1168, 26, 1195)}
      ${this.grpS(52, 1208, [[1223, 20, sm.d1], [1247, 20, sm.d2]], [[1224, 20, sm.d3], [1246, 20, sm.d4]], "加...", 1224, 26, 1247)}
      ${this.grpS(98, 1260, [[1276, 20, sm.e1], [1299, 20, sm.e2], [1322, 20, sm.e3], [1345, 20, sm.e4]], [[1276, 20, sm.e5], [1299, 20, sm.e6], [1314, 1, vsep], [1328, 22, sm.e7]], "建模工具 ...", 1299, 70, 1345)}
      ${this.grpS(29, 1358, [[1373, 20, sm.f1]], [[1373, 20, sm.f1]], "'.", 1362, 6, 1374)}
      ${this.grpS(289, 1387, [
        [1403, 22, sm.g1], [1417, 1, vsep], [1432, 16, sm.x], [1455, 22, sm.dim1], [1478, 22, sm.dim2], [1501, 22, sm.dim2], [1524, 22, sm.dim2], [1546, 20, sm.xb], [1569, 20, sm.xp], [1592, 24, sm.h7], [1616, 22, sm.h8], [1639, 22, sm.h9], [1662, 22, sm.h10],
      ], [[1403, 22, sm.r1], [1426, 22, sm.r2], [1440, 1, vsep], [1455, 20, sm.r3], [1478, 20, sm.r4], [1500, 20, sm.r5]], "尺寸快速格式化工具 - GC工具箱", 1520, 203, 1662)}
      <div class="p" style="margin-left:229px;width:10px;align-self:flex-start;margin-top:86px">${dd}</div>
    </div>

    <div class="tool2">
      ${place(0, [
        [18, 12, html`<i class="hb"></i>`],
        [55, 52, html`<span>菜单(<span class="u">M</span>)</span>`],
        [91, 8, dd],
        [102, 1, vsep],
        [206.500, 183, html`<span class="sel">无选择过滤器${dd}</span>`],
        [316, 24, I(22, 22, svg`<path d="M3 3 H17 L12 10 V18 M8 10 L3 3 M8 10 V14" fill="none" stroke="#aaa"/><path d="M14 20 Q19 16 15 13 M15 13 L12 14" fill="none" stroke="#aaa"/>`)],
        [426.500, 191, html`<span class="sel">整个装配${dd}</span>`],
        [541, 23, html`<span class="act">${tb.part}</span>`],
        [565, 22, tb.link],
        [591, 24, tb.funnel],
        [607, 8, dd],
        [627, 22, tb.sel1],
        [653, 24, tb.sel2],
        [679, 24, tb.sel3],
        [698, 8, dd],
        [722, 22, tb.c1],
        [746, 23, html`<span class="act">${tb.c2}</span>`],
        [765, 1, vsep],
        [782, 22, tb.cyl],
        [799, 8, dd],
        [821, 20, tb.fit],
        [844, 20, tb.gr],
        [862, 1, vsep],
        [1909, 8, dd],
      ])}
    </div>

    <div class="main">
      <div class="rail">
        ${rail.map((r: any, i: number) => {
          const h = r[1] ? 46 : 42;
          const prev = i ? (rail[i - 1] as any) : null;
          const prevEnd = prev ? (prev[0] as number) + (prev[1] ? 23 : 21) : 202;
          const m = (r[0] as number) - h / 2 - prevEnd;
          return html`<span class="ri ${r[1] ? "on" : ""}" style="margin-top:${m}px">${r[2]}</span>`;
        })}
      </div>
      <div class="nav">
        <div class="nh"><span>部件导航器</span><i class="mx"></i></div>
        <div class="tbl">
          <div class="hd"><span>名称<i class="sort"></i></span><span>当.</span><span>最.</span><span>附注</span></div>
          <div class="body">
            ${rows.map((r, i) => html`<div class="row ${i % 2 ? "alt" : ""} ${r.l ? "l1" : ""} ${r.dim ? "dim" : ""} ${r.bold ? "bold" : ""}">
              <span>${r.e ?? ""}${r.ic.map((x: any) => html`<span class="icn">${x}</span>`)}<span class="tx">${r.t}</span></span>
              <span>${r.c ?? ""}</span><span>${r.k ? check : ""}</span><span></span></div>`)}
            ${emptyRows.map((_, i) => html`<div class="row ${(i + rows.length) % 2 ? "alt" : ""}"><span></span><span></span><span></span><span></span></div>`)}
            <svg class="dots" width="120" height="190"><path d="M9.500 17 V112 M28.500 120 V180 M28.500 132 H36 M28.500 156 H36 M28.500 180 H36" fill="none" stroke="#888" stroke-dasharray="1 2"/></svg>
          </div>
          <div class="sb"><i></i></div>
        </div>
        <div class="sash"></div>
        ${["搜索", "相关性", "细节", "预览"].map((s) => html`<div class="sec"><i></i><span>${s}</span></div>`)}
      </div>
      <div class="right">
        <div class="tabs">
          ${tabs.map((t) => html`<span class="tab" style="width:${t.w}px">${t.ic}<span>${t.t}</span>${t.m ? html`<span class="mk">${doc()}</span>` : ""}</span>`)}
          <span class="tab on">${tabIcon("#aab4ba")}<span>control_cover_cavity_023.prt</span><span class="mk">${doc("#fff")}</span><span class="xx">×</span></span>
        </div>
        <div class="vp">${this.scene()}</div>
      </div>
    </div>
    <div class="status"><span>选择对象并使用 MB3，或者双击某一对象</span><span class="sm">该操作重置恢复数据</span></div>
    <div class="task">
      ${place(0, [
        ...taskIcons.map((t): [number, number, any] => [t[0], 48, html`<span class="ti">${t[2]}${t[1] ? html`<i class="d"></i>` : ""}</span>`]),
        [1208, 48, html`<span class="ti on">${snip}<i class="d"></i></span>`],
        [1635, 16, I(16, 10, svg`<path d="M1 9 L8 2 L15 9" fill="none" stroke="#111" stroke-width="1.200"/>`)],
        [1665, 22, I(22, 14, svg`<path d="M5 13 A4 4 0 0 1 5 5 A6 6 0 0 1 16 5 A4 4 0 0 1 17 13Z" fill="#4aa6dc" stroke="#222"/>`)],
        [1699, 20, html`<span class="yy">英</span>`],
        [1740, 20, I(20, 20, svg`<path d="M1 3 H13 M1 3 V14 H15 M8 14 V18 M4 18 H12" fill="none" stroke="#111"/><rect x="15" y="1" width="4" height="5" fill="none" stroke="#111"/><path d="M17 6 V18" stroke="#111"/>`)],
        [1770, 20, I(20, 18, svg`<path d="M2 7 H6 L11 3 V15 L6 11 H2Z" fill="none" stroke="#111"/><path d="M13 6 Q15 9 13 12 M15 4 Q18 9 15 14 M17 2 Q21 9 17 16" fill="none" stroke="#111"/>`)],
        [1800, 20, I(20, 18, svg`<rect x="6" y="4" width="13" height="10" fill="#333"/><rect x="9" y="6" width="7" height="6" fill="#ccc"/><path d="M1 5 H5 M3 3 V8" stroke="#111" stroke-width="1.600"/>`)],
        [1851, 100, html`<span class="clock">0:34<br />2021/10/23</span>`],
      ])}
    </div>
    <svg class="wm" viewBox="0 0 270 84">
      <polygon points="36,0 72,20 72,62 36,82 0,62 0,20" fill="#66bdf0" opacity=".42"/>
      <path d="M36 0 L72 20 V62 L60 68 Q64 38 36 20 Q20 14 0 20Z" fill="#7acbf5" opacity=".35"/>
      <polygon points="36,22 52,31 52,49 36,58 20,49 20,31" fill="#fff" opacity=".35"/>
      <polygon points="36,40 52,31 52,49 36,58" fill="#3d95cf" opacity=".5"/>
      <polygon points="36,40 20,31 20,49 36,58" fill="#8ec4e6" opacity=".55"/>
      <text x="84" y="53" font-size="38" font-weight="700" fill="#fff" opacity=".45" letter-spacing="1">3D世界网</text>
      <text x="86" y="70" font-size="12.500" fill="#fff" opacity=".55" letter-spacing="2.700" font-family="Open Sans">WWW.3DSJW.COM</text>
    </svg>`;
  }

  grp(w: number, start: number, body: any, label: string, lc: number, dc: number) {
    return html`<div class="g" style="width:${w}px"><div class="gb">${body}</div>
      <div class="gl">${place(start, [[lc, label.length * 14, html`<span>${label}</span>`], [dc, 8, dd]])}</div></div>`;
  }
  grpS(w: number, start: number, a: any, b: any, label: string, lc: number, lw: number, dc: number) {
    return html`<div class="g" style="width:${w}px"><div class="gs"><div class="gr">${place(start, a)}</div><div class="gr">${place(start, b)}</div></div>
      <div class="gl">${place(start, [[lc, lw, html`<span>${label}</span>`], [dc, 8, dd]])}</div></div>`;
  }

  scene() {
    const ln = "#6f8085";
    return html`<svg viewBox="418 232 1500 762">
      <defs>
        <linearGradient id="sh" x2="0" y2="1"><stop offset="0" stop-color="#c99a7e"/><stop offset="1" stop-color="#8f7a6e"/></linearGradient>
        <linearGradient id="shl" x2="1" y2="0"><stop offset="0" stop-color="#9a8674"/><stop offset="1" stop-color="#cb9a7e"/></linearGradient>
        <linearGradient id="blu" x2="0" y2="1"><stop offset="0" stop-color="#a5b0c4"/><stop offset=".4" stop-color="#8a97a8"/><stop offset="1" stop-color="#7f8c99"/></linearGradient>
        <linearGradient id="endg" x2="1" y2="0"><stop offset="0" stop-color="#cda083"/><stop offset=".5" stop-color="#cd9e82"/><stop offset="1" stop-color="#b39179"/></linearGradient>
        <linearGradient id="bump" x2="1" y2="0"><stop offset="0" stop-color="#cb9a7e"/><stop offset=".5" stop-color="#ad8e7a"/><stop offset="1" stop-color="#a58a78"/></linearGradient>
        <linearGradient id="gy" x2="0" y2="1"><stop offset="0" stop-color="#5fc05f"/><stop offset="1" stop-color="#1f6e1f"/></linearGradient>
      </defs>
      <rect x="435" y="470" width="1466" height="292" fill="#b5c5ca"/>
      <path d="M1666 471 H1900 V493 H1673 Q1667 482 1666 471Z" fill="url(#blu)"/>
      <path d="M727 471 H1666 Q1665 485 1670 496 V512 Q1670 533 1645 533 H1114 L1111 530 V513 H1124 V506 H727Z" fill="#cb9a7e"/>
      <path d="M1124 509 H1670 V512 Q1670 533 1645 533 H1114 L1111 530 V513 H1124Z" fill="url(#sh)"/>
      <rect x="1600" y="510" width="35" height="23" fill="#c0967f" opacity=".6"/>
      <path d="M1635 471 H1666 Q1665 485 1670 496 V509 H1635Z" fill="url(#endg)"/>
      <path d="M1635 509 H1670 V512 Q1670 533 1645 533 H1622 Q1635 530 1635 509Z" fill="#ab8a76"/>
      <path d="M665 471 H727 V505 L735 506 L727 532 H688 Q665 532 665 508Z" fill="#cb9a7e"/>
      <path d="M665 471 H727 V502 Q705 482 665 482Z" fill="url(#shl)"/>
      <rect x="735" y="506" width="389" height="7" fill="#cb9a7e"/>
      <path d="M1012 504 Q1050 482 1072 482 Q1098 484 1107 504Z" fill="url(#bump)"/>
      <g fill="none" stroke=${ln} stroke-width="1.200">
        <path d="M665 471 V508 Q665 532 688 532 H727 L735 506"/>
        <path d="M665 482 Q700 482 724 504"/>
        <circle cx="689" cy="497" r="6.200"/>
        <path d="M727.500 471 V501"/>
        <path d="M724 501 H1130 M724 506 H1124"/>
        <path d="M1124 505 V513 M1111 513 V530 L1114 533 H1645 Q1670 533 1670 512 V496 Q1665 485 1666 471"/>
        <path d="M1124 509 H1670 M1130 502 V533 M1600 471 V533 M1635 471 V509 Q1635 530 1620 533"/>
        <path d="M1042 489 V504 M1071 482 V504 M1076 482 V504 M1092 488 V504 M1098 491 V504 M1076 484 Q1098 486 1103 503"/>
        <rect x="1124" y="502" width="5" height="5"/>
      </g>
      <path d="M735 513 H1124" stroke=${ln} stroke-width="2"/>
      <path d="M1012 504 Q1050 482 1072 482 Q1098 484 1107 504" fill="none" stroke=${ln} stroke-width="2"/>
      <path d="M1012 504 H1107" stroke=${ln} stroke-width="1.500"/>
      <rect x="435" y="470" width="1466" height="292" fill="none" stroke="#4d5558" stroke-width="1.500"/>

      <path d="M1206 382 L1204 412 L1206 434 L1208 412Z" fill="#1447e0"/>
      <path d="M1209 378 L1236 376 L1250 375 L1263 378 L1250 381 L1236 380Z" fill="#2e9a35"/>
      <circle cx="1206.500" cy="377" r="2.800" fill="#9c1c1c"/>
      <text x="1207" y="378" font-size="13" fill="#d64a4a">XC</text>
      <text x="1247" y="373" font-size="13" fill="#3fa544">YC</text>
      <text x="1212" y="446" font-size="13" fill="#4a6ae8">ZC</text>

      <rect x="499" y="872" width="40" height="40" fill="#e8e9eb" stroke="#c8c8c8" stroke-width="1.600"/>
      <path d="M539 889 H571 V887 L589 892 L571 897 V895 H539Z" fill="url(#gy)"/>
      <path d="M516 913 H522 V944 H525 L519 962 L513 944 H516Z" fill="#1447f0"/>
      <text x="595" y="897" font-size="12" fill="#3aa03a">Y</text>
      <text x="514" y="977" font-size="12" fill="#4a6ae8">Z</text>
    </svg>`;
  }
}
